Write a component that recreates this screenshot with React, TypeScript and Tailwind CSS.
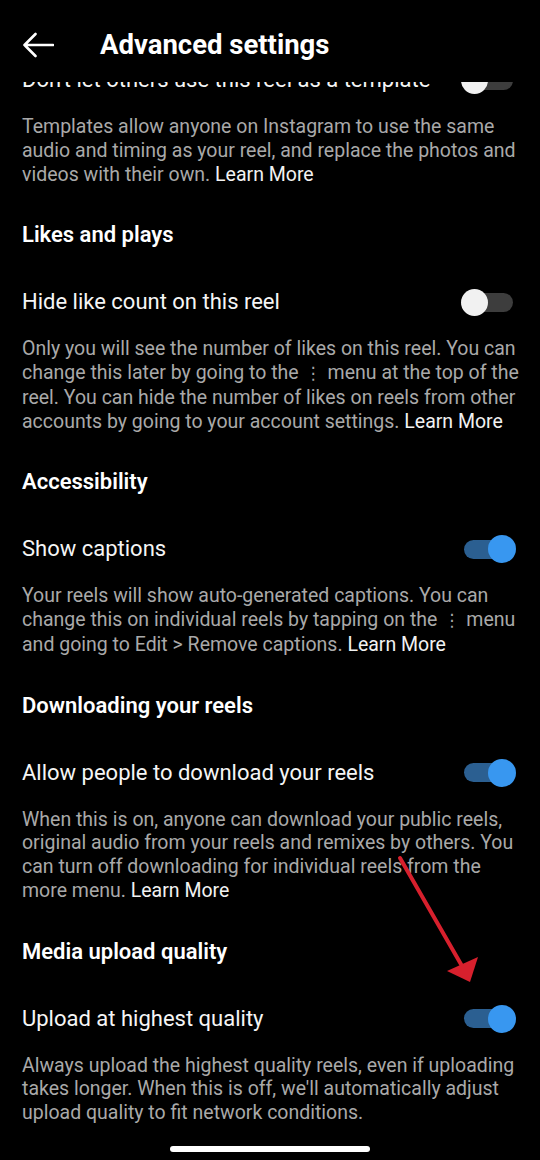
import React from "react";

type Section = {
  heading?: string;
  label: string;
  on: boolean;
  lines: React.ReactNode[];
};

const Dots = () => <span className="mx-[6px] text-[17px]">⋮</span>;
const Learn = () => <span className="text-[#f2f2f2]">Learn More</span>;

const sections: Section[] = [
  {
    label: "Don't let others use this reel as a template",
    on: false,
    lines: [
      "Templates allow anyone on Instagram to use the same",
      "audio and timing as your reel, and replace the photos and",
      <>videos with their own. <Learn /></>,
    ],
  },
  {
    heading: "Likes and plays",
    label: "Hide like count on this reel",
    on: false,
    lines: [
      "Only you will see the number of likes on this reel. You can",
      <>change this later by going to the<Dots />menu at the top of the</>,
      "reel. You can hide the number of likes on reels from other",
      <>accounts by going to your account settings. <Learn /></>,
    ],
  },
  {
    heading: "Accessibility",
    label: "Show captions",
    on: true,
    lines: [
      "Your reels will show auto-generated captions. You can",
      <>change this on individual reels by tapping on the<Dots />menu</>,
      <>and going to Edit &gt; Remove captions. <Learn /></>,
    ],
  },
  {
    heading: "Downloading your reels",
    label: "Allow people to download your reels",
    on: true,
    lines: [
      "When this is on, anyone can download your public reels,",
      "original audio from your reels and remixes by others. You",
      "can turn off downloading for individual reels from the",
      <>more menu. <Learn /></>,
    ],
  },
  {
    heading: "Media upload quality",
    label: "Upload at highest quality",
    on: true,
    lines: [
      "Always upload the highest quality reels, even if uploading",
      "takes longer. When this is off, we'll automatically adjust",
      "upload quality to fit network conditions.",
    ],
  },
];

function Toggle({ on }: { on: boolean }) {
  return (
    <div className="relative h-[28px] w-[55px] shrink-0">
      {on ? (
        <>
          <div className="absolute left-[3px] top-[4.5px] h-[19px] w-[41px] rounded-full bg-[#2b5f91]" />
          <div className="absolute right-0 top-0 h-[28px] w-[28px] rounded-full bg-[#3897f0]" />
        </>
      ) : (
        <>
          <div className="absolute left-[9px] right-[3px] top-[4.5px] h-[19px] rounded-full bg-[#3d3d3d]" />
          <div className="absolute left-0 top-[0.5px] h-[27px] w-[27px] rounded-full bg-[#f1f1f1]" />
        </>
      )}
    </div>
  );
}

export default function App() {
  return (
    <div
      className="relative flex h-[1160px] w-[540px] flex-col bg-black text-[#f5f5f5]"
      style={{ fontFamily: "Roboto, 'Noto Sans', 'DejaVu Sans', sans-serif" }}
    >
      <header className="z-10 flex h-[82px] shrink-0 items-center bg-black pt-[8px]">
        <button className="ml-[22px] flex h-[30px] w-[32px] items-center">
          <svg width="32" height="26" viewBox="0 0 32 26" fill="none">
            <path
              d="M31 13H2.5M13.5 2L2.5 13l11 11"
              stroke="#fff"
              strokeWidth="2.6"
              strokeLinecap="round"
              strokeLinejoin="round"
            />
          </svg>
        </button>
        <h1 className="ml-[46px] text-[27.5px] font-bold leading-[32px] text-white">Advanced settings</h1>
      </header>

      <main className="flex-1 overflow-hidden">
        <div className="-mt-[30px]">
          {sections.map((s, i) => (
            <section key={i}>
              {s.heading && (
                <h2 className="pl-[22px] pt-[37px] text-[22px] font-semibold leading-[24px] text-white">
                  {s.heading}
                </h2>
              )}
              <div className={`flex h-[56px] items-center justify-between pl-[22px] pr-[24px] ${s.heading ? "mt-[27px]" : ""}`}>
                <span className="text-[22px] leading-[24px]">{s.label}</span>
                <Toggle on={s.on} />
              </div>
              <p className="mt-[7px] whitespace-nowrap pl-[22px] text-[19.5px] leading-[23.75px] text-[#a9a9a9]">
                {s.lines.map((l, j) => (
                  <React.Fragment key={j}>
                    {l}
                    {j < s.lines.length - 1 && <br />}
                  </React.Fragment>
                ))}
              </p>
            </section>
          ))}
        </div>
      </main>

      <footer className="flex h-[20px] shrink-0 justify-center pt-[6px]">
        <div className="h-[6px] w-[200px] rounded-full bg-white" />
      </footer>

      <svg className="pointer-events-none absolute left-0 top-0" width="540" height="1160">
        <line x1="400" y1="858" x2="462" y2="966" stroke="#d7202d" strokeWidth="4" strokeLinecap="round" />
        <polygon points="470,982 447,971 478,957" fill="#d7202d" />
      </svg>
    </div>
  );
}
